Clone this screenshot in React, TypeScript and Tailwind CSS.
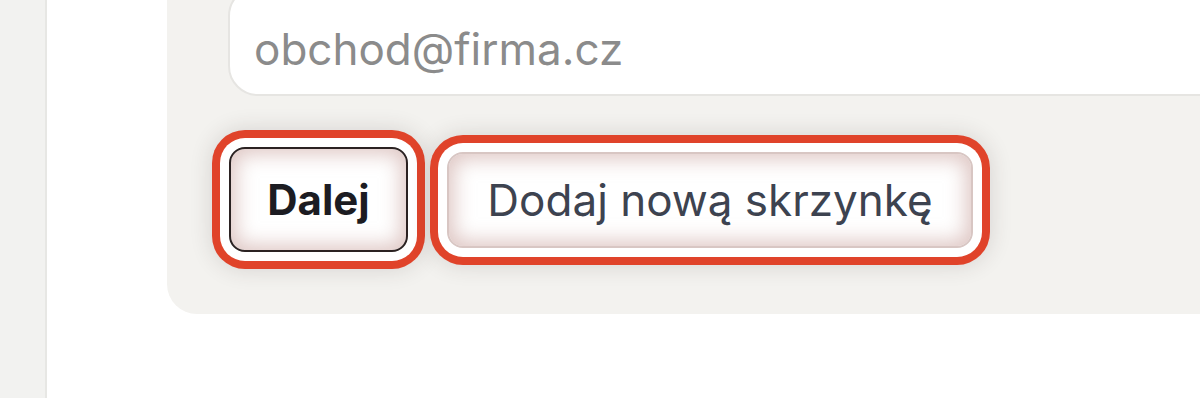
import React from 'react';

const ring =
  'shadow-[0_0_0_9px_#ffffff,0_0_0_17px_#e0432a,0_0_22px_18px_rgba(60,40,40,0.14),inset_0_0_20px_5px_rgba(200,160,155,0.6)]';

export default function App() {
  return (
    <div
      className="flex h-[398px] w-[1200px] overflow-hidden bg-white"
      style={{ fontFamily: 'Inter, "Liberation Sans", sans-serif' }}
    >
      {/* sidebar edge */}
      <div className="w-[47px] shrink-0 border-r-2 border-[#e7e7e4] bg-[#f2f2f0]" />

      <div className="flex-1 pl-[120px]">
        <div className="-mt-[30px] w-[1200px] rounded-bl-[30px] bg-[#f3f2ef] pb-[62px] pl-[61px] pt-[16px]">
          <input
            className="block h-[110px] w-[1100px] rounded-[30px] border-2 border-[#e6e5e2] bg-white pl-[24px] pt-[16px] text-[44px] text-[#3d4350] outline-none placeholder:text-[#8b8b8b]"
            placeholder="obchod@firma.cz"
          />

          <div className="mt-[51px] flex items-center gap-[39px] pl-[1px]">
            <button
              className={`h-[105px] w-[179px] rounded-[16px] border-2 border-[#2b2222] bg-white text-[42px] font-bold text-[#1c1c22] ${ring}`}
            >
              Dalej
            </button>
            <button
              className={`h-[96px] w-[526px] rounded-[16px] border-2 border-[#d8c6c3] bg-white text-[44px] font-normal text-[#3d4350] ${ring}`}
            >
              Dodaj nową skrzynkę
            </button>
          </div>
        </div>
      </div>
    </div>
  );
}
